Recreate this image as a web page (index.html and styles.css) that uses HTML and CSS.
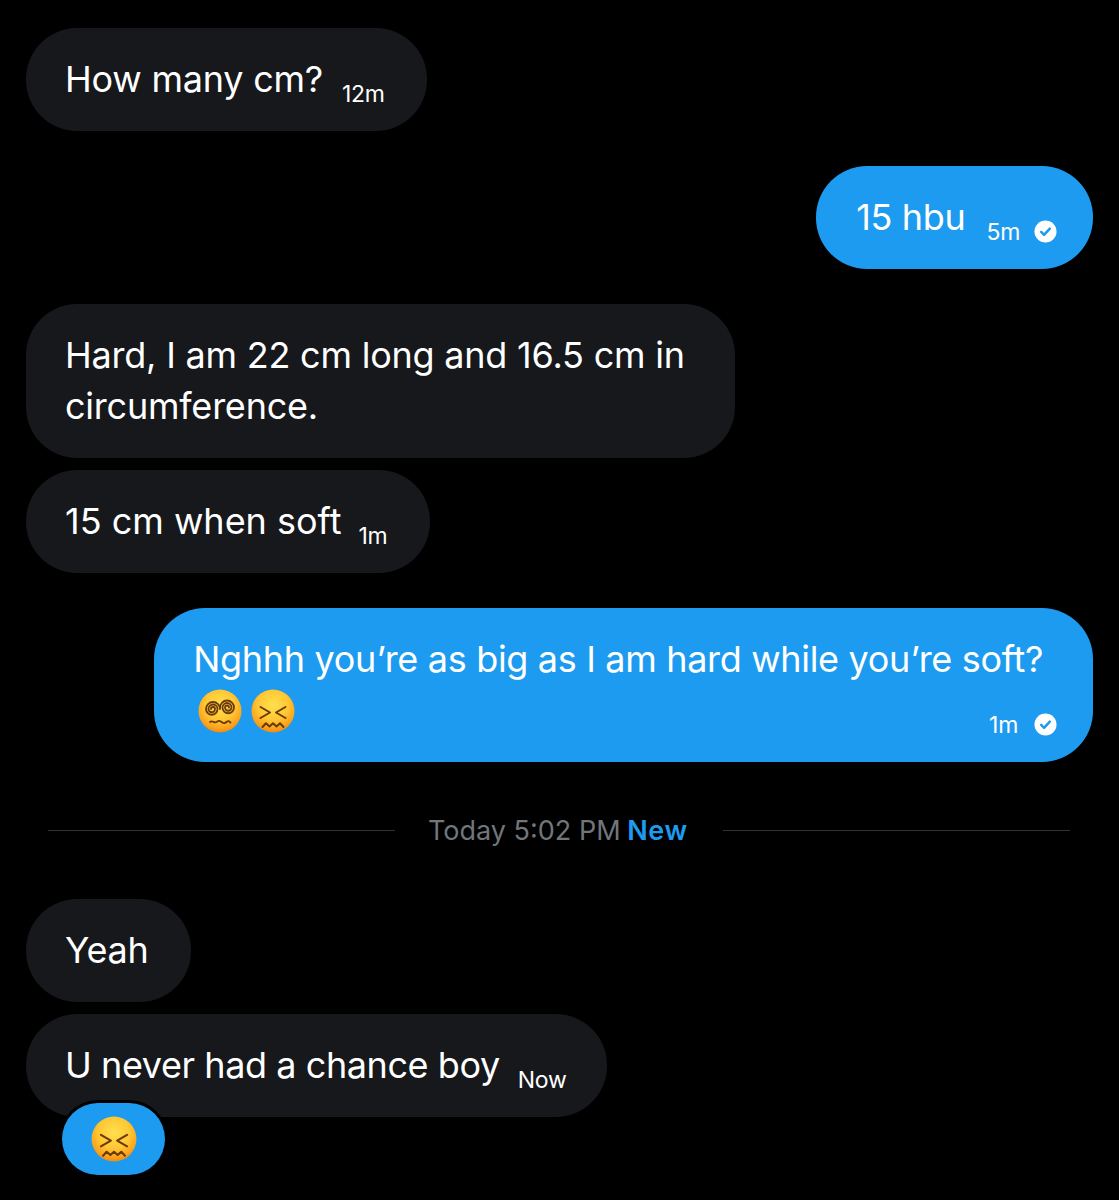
FILE: index.html
```html
<!doctype html>
<html>
<head>
  <title>Messages</title>
  <link rel="stylesheet" href="styles.css">
</head>
<body>
  <svg class="defs" width="0" height="0">
    <defs>
      <radialGradient id="face" cx="50%" cy="36%" r="64%">
        <stop offset="0" stop-color="#ffe04f"/>
        <stop offset="0.55" stop-color="#ffc733"/>
        <stop offset="0.85" stop-color="#fba31c"/>
        <stop offset="1" stop-color="#f28a12"/>
      </radialGradient>
      <symbol id="dizzy" viewBox="0 0 44 44">
        <circle cx="22" cy="22" r="21.5" fill="url(#face)"/>
        <g fill="none" stroke="#6b3a0c" stroke-width="1.8" stroke-linecap="round">
          <path d="M13 20a2 2 0 0 1 4 0a3.250 3.250 0 0 1-6.500 0a4.500 4.500 0 0 1 9 0a5.750 5.750 0 0 1-11.500 0a7 7 0 0 1 14 0"/>
          <path d="M31 18.500a2 2 0 0 0-4 0a3.250 3.250 0 0 0 6.500 0a4.500 4.500 0 0 0-9 0a5.750 5.750 0 0 0 11.500 0a7 7 0 0 0-14 0"/>
          <path d="M12 33c2.500-2 4 1.500 6.500 0s3-1.500 5 0s3.500 1.500 5 0s2.500-1 4 .5"/>
        </g>
      </symbol>
      <symbol id="confounded" viewBox="0 0 44 44">
        <circle cx="22" cy="22" r="21.500" fill="url(#face)"/>
        <g fill="none" stroke="#6b3a0c" stroke-width="2" stroke-linecap="round" stroke-linejoin="round">
          <path d="M9.500 18l9.500 5.500l-9.500 5.500"/>
          <path d="M34.500 18l-9.500 5.500l9.500 5.500"/>
          <path d="M11.500 38l3.500-3.800l3.500 3.200l3.500-3.200l3.500 3.200l3.500-3.200l3.500 3.800"/>
        </g>
      </symbol>
    </defs>
  </svg>

  <div class="thread">
    <div class="row">
      <div class="bubble in"><span>How many cm?</span><span class="time">12m</span></div>
    </div>

    <div class="row mine">
      <div class="bubble out sent">
        <span>15 hbu</span>
        <span class="time">5m</span>
        <svg class="check" viewBox="0 0 24 24"><circle cx="12" cy="12" r="11.500" fill="#fff"/><path d="M7.500 12.500l3 3l6-6.500" fill="none" stroke="#1d9bf0" stroke-width="2.600" stroke-linecap="round" stroke-linejoin="round"/></svg>
      </div>
    </div>

    <div class="row">
      <div class="bubble in long">Hard, I am 22 cm long and 16.5 cm in<br>circumference.</div>
    </div>
    <div class="row tight">
      <div class="bubble in soft"><span>15 cm when soft</span><span class="time">1m</span></div>
    </div>

    <div class="row mine">
      <div class="bubble out long">
        <div>Nghhh you’re as big as I am hard while you’re soft?</div>
        <div class="last-line">
          <div class="emojis">
            <svg class="emoji"><use href="#dizzy"/></svg>
            <svg class="emoji"><use href="#confounded"/></svg>
          </div>
          <div class="meta">
            <span class="time">1m</span>
            <svg class="check" viewBox="0 0 24 24"><circle cx="12" cy="12" r="11.500" fill="#fff"/><path d="M7.500 12.500l3 3l6-6.500" fill="none" stroke="#1d9bf0" stroke-width="2.600" stroke-linecap="round" stroke-linejoin="round"/></svg>
          </div>
        </div>
      </div>
    </div>

    <div class="divider">
      <span class="line"></span>
      <span class="divider-text">Today 5:02 PM <b>New</b></span>
      <span class="line"></span>
    </div>

    <div class="row">
      <div class="bubble in"><span>Yeah</span></div>
    </div>
    <div class="row tight">
      <div class="bubble in now"><span>U never had a chance boy</span><span class="time">Now</span></div>
    </div>
    <div class="reaction">
      <svg class="emoji"><use href="#confounded"/></svg>
    </div>
  </div>
</body>
</html>
```

FILE: styles.css
```css
body {
  margin: 0;
  background: #000;
  color: #fff;
  font-family: Inter, "Liberation Sans", sans-serif;
  font-size: 36px;
  line-height: 51px;
  letter-spacing: -0.33px;
}
.defs { display: block; }
.thread {
  display: flex;
  flex-direction: column;
  padding: 28px 26px 0 26px;
  height: 1172px;
  overflow: hidden;
}
.row { display: flex; margin-bottom: 35px; }
.row.mine { justify-content: flex-end; }
.row.tight { margin-top: -23px; }
.bubble {
  display: flex;
  align-items: center;
  padding: 26px 42px 26px 39px;
  border-radius: 51px;
}
.bubble.in { background: #16181c; letter-spacing: -0.22px; }
.bubble.out { background: #1d9bf0; }
.bubble.long { display: block; padding-right: 50px; }
.bubble.sent { padding-left: 40px; padding-right: 36px; }
.bubble.soft { letter-spacing: 0; padding-right: 43px; }
.bubble.now { letter-spacing: -0.42px; padding-right: 41px; }
.time {
  align-self: flex-end;
  font-size: 23px;
  letter-spacing: -0.3px;
  line-height: 28px;
  margin: 0 0 -3px 19px;
}
.bubble.soft .time { margin-left: 17px; }
.bubble.now .time { margin-left: 18px; }
.bubble.sent .time { margin-left: 21px; }
.check { align-self: flex-end; width: 23px; height: 23px; margin: 0 0 0 14px; }
.last-line { display: flex; justify-content: space-between; margin: 0 -14px 0 5px; }
.emojis { display: flex; gap: 9px; height: 51px; align-items: center; }
.emoji { width: 44px; height: 44px; display: block; }
.meta { display: flex; height: 51px; }
.meta .check { margin-left: 16px; }
.divider {
  display: flex;
  align-items: center;
  padding: 0 23px 0 22px;
  margin: 18px 0 54px;
  height: 30px;
}
.line { flex: 1; height: 1px; background: #2f3336; }
.divider-text {
  padding: 0 35px 0 33px;
  font-size: 27px;
  letter-spacing: 0;
  color: #71767b;
  white-space: nowrap;
}
.divider-text b { color: #1d9bf0; font-weight: 600; margin-left: -1px; letter-spacing: 0.7px; }
.reaction {
  position: relative;
  align-self: flex-start;
  margin: -49px 0 0 36px;
  width: 103px;
  height: 72px;
  display: flex;
  align-items: center;
  justify-content: center;
  background: #1d9bf0;
  border-radius: 36px;
  box-shadow: 0 0 0 3px #000;
}
.reaction .emoji { width: 46px; height: 46px; }
```
